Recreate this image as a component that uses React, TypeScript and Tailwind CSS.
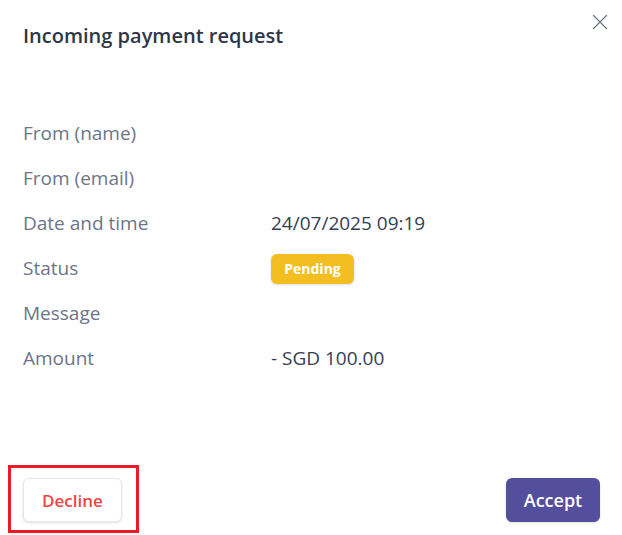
import { X } from 'lucide-react';

const rows: { label: string; value?: string; badge?: string }[] = [
  { label: 'From (name)' },
  { label: 'From (email)' },
  { label: 'Date and time', value: '24/07/2025 09:19' },
  { label: 'Status', badge: 'Pending' },
  { label: 'Message' },
  { label: 'Amount', value: '- SGD 100.00' },
];

export default function App() {
  return (
    <div className="w-[622px] h-[535px] bg-white flex flex-col font-['Open_Sans',sans-serif]">
      <div className="flex justify-between items-start pl-[23px] pr-[9px]">
        <h2 className="pt-[22px] text-[20px] leading-[28px] font-semibold text-[#2d3748]">
          Incoming payment request
        </h2>
        <button className="pt-[9px] text-[#6b7280]">
          <X size={26} strokeWidth={1.1} />
        </button>
      </div>

      <div className="flex flex-col pl-[23px] pt-[61px]">
        {rows.map((r) => (
          <div key={r.label} className="flex items-center h-[45px]">
            <span className="w-[248px] text-[19px] text-[#6b7589]">{r.label}</span>
            {r.value && <span className="text-[19px] text-[#344054]">{r.value}</span>}
            {r.badge && (
              <span className="h-[30px] w-[83px] flex items-center justify-center rounded-[6px] bg-[#f3be22] text-white text-[14px] font-bold shadow-sm">
                {r.badge}
              </span>
            )}
          </div>
        ))}
      </div>

      <div className="mt-auto flex justify-between items-end pl-[8px] pr-[22px] pb-[2px]">
        <div className="border-[3px] border-[#ed1c24] pl-[12px] pr-[14px] pt-[10px] pb-[8px]">
          <button className="w-[99px] h-[44px] pt-[2px] rounded-[6px] border border-[#e5e7eb] bg-white text-[#ef4444] text-[17px] font-semibold shadow-sm">
            Decline
          </button>
        </div>
        <button className="mb-[11px] w-[94px] h-[44px] rounded-[6px] bg-[#544f9c] text-white text-[18px] font-semibold shadow-sm">
          Accept
        </button>
      </div>
    </div>
  );
}
